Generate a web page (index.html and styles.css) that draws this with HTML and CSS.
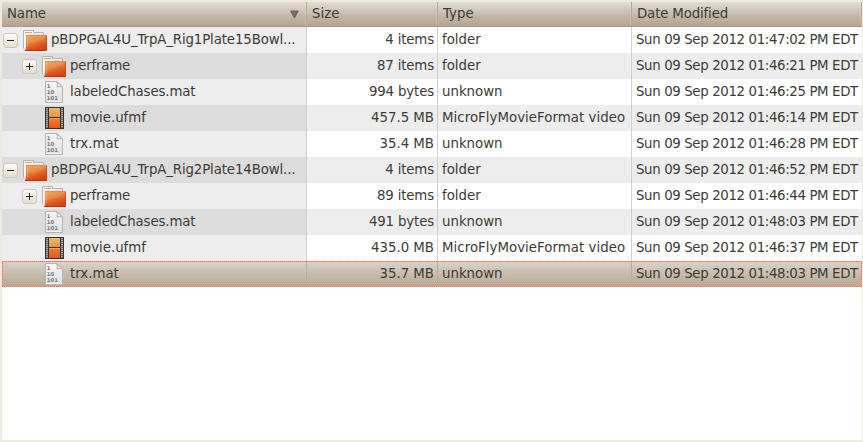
FILE: index.html
```
<!DOCTYPE html>
<html lang="en">
<head>
<meta charset="utf-8">
<title>Files</title>
<link rel="stylesheet" href="styles.css">
</head>
<body>
<svg class="defs" width="0" height="0" aria-hidden="true">
  <defs>
    <linearGradient id="g-folder" x1=".2" y1="0" x2=".65" y2="1"><stop offset="0" stop-color="#eca45c"/><stop offset=".35" stop-color="#e88842"/><stop offset=".7" stop-color="#db591f"/><stop offset="1" stop-color="#d04010"/></linearGradient>
    <linearGradient id="g-page" x1="0" y1="0" x2="0" y2="1"><stop offset="0" stop-color="#f6f6f6"/><stop offset="1" stop-color="#e0e0e0"/></linearGradient>
    <linearGradient id="g-film1" x1="0" y1="0" x2="0" y2="1"><stop offset="0" stop-color="#e8b56c"/><stop offset="1" stop-color="#e8934a"/></linearGradient>
    <linearGradient id="g-film2" x1="0" y1="0" x2="0" y2="1"><stop offset="0" stop-color="#ea8037"/><stop offset="1" stop-color="#e8551e"/></linearGradient>
  </defs>
  <symbol id="folder" viewBox="0 0 24 24">
    <path d="M.5 20.500V2.500H10.500V4.500H20.500V8" fill="#f4f4f4" stroke="#b4b4b4"/>
    <path d="M2 4.500H9" stroke="#f0a070"/>
    <path d="M11 6.500H19" stroke="#ddd"/>
    <path d="M1.500 5.500V20" stroke="#fff"/>
    <path d="M3 7H24V22Q24 23 23 23H1.500Q3 22 3 19Z" fill="url(#g-folder)"/>
    <path d="M3 7.500H24" stroke="#e38a55"/>
    <path d="M4.500 8V19" stroke="#f3b580" opacity=".6"/>
    <path d="M4 16Q15 15 23 9V8H4Z" fill="#ffd28a" opacity=".12"/>
    <path d="M2 22.500H23.500" stroke="#c62d12"/>
    <path d="M23.500 8V22" stroke="#cc3d10" opacity=".6"/>
  </symbol>
  <symbol id="page" viewBox="0 0 18 24">
    <path d="M.5 1.500H12L17.500 7V22.500H.5Z" fill="url(#g-page)" stroke="#b5b5b5"/>
    <path d="M1.500 21.500H16.500" stroke="#fff" opacity=".7"/>
    <path d="M11.500 1.500Q13 4 12 7Q15 6 17.500 7Z" fill="#fff" stroke="#b0b0b0"/>
    <g class="bits"><text x="1.800" y="8">1</text><text x="1.800" y="14">10</text><text x="1.800" y="20">101</text></g>
  </symbol>
  <symbol id="film" viewBox="0 0 19 22">
    <path d="M0 0H19V22H0Z" fill="#333"/>
    <path d="M4 1H15V10H4Z" fill="url(#g-film1)"/>
    <path d="M4 11H15V21H4Z" fill="url(#g-film2)"/>
    <path d="M4 1.500H15M4 11.500H15" stroke="#f2be86" opacity=".6"/>
    <path d="M2 1V21M17 1V21" stroke="#a5a5a5" stroke-width="2" stroke-dasharray="1.400 .6"/>
  </symbol>
</svg>
<main class="list">
  <div class="row head">
    <div class="cell name"><span>Name</span><svg class="sort" width="9" height="9"><path d="M.8 1H8.200L4.500 8Z" fill="#777068" stroke="#665f57"/></svg></div>
    <div class="cell">Size</div><div class="cell">Type</div><div class="cell title">Date Modified</div>
  </div>
  <div class="row"><div class="cell name top"><i class="toggle minus"></i><svg class="folder"><use href="#folder"/></svg><span>pBDPGAL4U_TrpA_Rig1Plate15Bowl...</span></div><div class="cell size">4 items</div><div class="cell">folder</div><div class="cell date">Sun 09 Sep 2012 01:47:02 PM EDT</div></div>
  <div class="row"><div class="cell name sub"><i class="toggle plus"></i><svg class="folder"><use href="#folder"/></svg><span class="tight">perframe</span></div><div class="cell size">87 items</div><div class="cell">folder</div><div class="cell date">Sun 09 Sep 2012 01:46:21 PM EDT</div></div>
  <div class="row"><div class="cell name leaf"><svg class="page"><use href="#page"/></svg><span>labeledChases.mat</span></div><div class="cell size">994 bytes</div><div class="cell">unknown</div><div class="cell date">Sun 09 Sep 2012 01:46:25 PM EDT</div></div>
  <div class="row"><div class="cell name leaf"><svg class="film"><use href="#film"/></svg><span class="normal">movie.ufmf</span></div><div class="cell size mb">457.5 MB</div><div class="cell video">MicroFlyMovieFormat video</div><div class="cell date">Sun 09 Sep 2012 01:46:14 PM EDT</div></div>
  <div class="row"><div class="cell name leaf"><svg class="page"><use href="#page"/></svg><span class="normal">trx.mat</span></div><div class="cell size mb">35.4 MB</div><div class="cell">unknown</div><div class="cell date">Sun 09 Sep 2012 01:46:28 PM EDT</div></div>
  <div class="row"><div class="cell name top"><i class="toggle minus"></i><svg class="folder"><use href="#folder"/></svg><span>pBDPGAL4U_TrpA_Rig2Plate14Bowl...</span></div><div class="cell size">4 items</div><div class="cell">folder</div><div class="cell date">Sun 09 Sep 2012 01:46:52 PM EDT</div></div>
  <div class="row"><div class="cell name sub"><i class="toggle plus"></i><svg class="folder"><use href="#folder"/></svg><span class="tight">perframe</span></div><div class="cell size">89 items</div><div class="cell">folder</div><div class="cell date">Sun 09 Sep 2012 01:46:44 PM EDT</div></div>
  <div class="row"><div class="cell name leaf"><svg class="page"><use href="#page"/></svg><span>labeledChases.mat</span></div><div class="cell size">491 bytes</div><div class="cell">unknown</div><div class="cell date">Sun 09 Sep 2012 01:48:03 PM EDT</div></div>
  <div class="row"><div class="cell name leaf"><svg class="film"><use href="#film"/></svg><span class="normal">movie.ufmf</span></div><div class="cell size mb">435.0 MB</div><div class="cell video">MicroFlyMovieFormat video</div><div class="cell date">Sun 09 Sep 2012 01:46:37 PM EDT</div></div>
  <div class="row selected"><div class="cell name leaf"><svg class="page"><use href="#page"/></svg><span class="normal">trx.mat</span></div><div class="cell size mb">35.7 MB</div><div class="cell">unknown</div><div class="cell date">Sun 09 Sep 2012 01:48:03 PM EDT</div></div>
</main>
</body>
</html>
```
FILE: styles.css
```
* { box-sizing: border-box; }
body { margin: 0; background: #fff; font: 13.33px/26px "DejaVu Sans", sans-serif; color: #3c3b37; }
.defs { position: absolute; }
.list { height: 442px; border: solid #eeeae0; border-width: 2px 1px 2px 2px; overflow: hidden; }
.row { display: grid; grid-template-columns: 305px 131px 194px 230px; height: 26px; background: #fff; }
.cell { display: flex; align-items: center; padding: 0 4px; border-right: 1px solid #cfcfcf; white-space: nowrap; min-width: 0; overflow: hidden; height: 26px; line-height: 26px; }
.cell:last-child { border-right-color: transparent; }
.size { justify-content: flex-end; padding-right: 3px; letter-spacing: -.15px; }
.size.mb { letter-spacing: 0; }
.video { letter-spacing: .04px; }
.date { letter-spacing: -.36px; }
.title { letter-spacing: -.15px; }
.name { background: #ededed; letter-spacing: -.12px; }
.tight { letter-spacing: -.2px; }
.normal { letter-spacing: 0; }
.row:nth-child(odd) { background: #ededed; }
.row:nth-child(odd) .name { background: #dcdcdc; }

.row.head { height: 25px; background: linear-gradient(#e2dcd2, #cbc1b3 45%, #c3b8a9 55%, #b3a594); border-bottom: 1px solid #a4978a; }
.row.head .cell { height: 24px; padding: 0 5px; background: none; border-right-color: #b5aa9c; box-shadow: inset -1px 0 rgba(255, 255, 255, .12); }
.row.head .name { justify-content: space-between; padding-right: 7px; }
.row:nth-child(even) .name { background: #ededed; }

.row.selected { position: relative; background: linear-gradient(#dcd4c9, #c9beaf 45%, #b5a796); }
.row.selected::after {
  --dots: #ff6a48 0 1px, #e6a590 1px 2px;
  content: ""; position: absolute; inset: 0;
  background:
    repeating-linear-gradient(90deg, var(--dots)) 0 0 / 100% 1px no-repeat,
    repeating-linear-gradient(90deg, var(--dots)) 0 100% / 100% 1px no-repeat,
    repeating-linear-gradient(var(--dots)) 0 0 / 1px 100% no-repeat,
    repeating-linear-gradient(var(--dots)) 100% 0 / 1px 100% no-repeat;
}
.row.selected .cell.name { background: none; }
.row.selected .cell { border-right-color: #b5aa9c; }

.cell svg { flex: none; }
.folder { width: 24px; height: 24px; margin-right: 4px; }
.page { width: 18px; height: 24px; margin-right: 7px; }
.film { width: 19px; height: 22px; margin-right: 6px; }
.top { padding-left: 1px; }
.sub { padding-left: 20px; }
.leaf { padding-left: 43px; }
.toggle { flex: none; position: relative; top: .5px; width: 15px; height: 15px; margin-right: 5px; border: 1px solid #cfc6ba; border-radius: 3px; background: linear-gradient(#fdfcfb, #e3ded3); }
.toggle::before, .plus::after { content: ""; position: absolute; left: 3px; top: 6px; width: 7px; height: 1px; background: #262626; }
.plus::after { left: 6px; top: 3px; width: 1px; height: 7px; }
.bits { font: bold 5.3px "DejaVu Sans", sans-serif; letter-spacing: 0; fill: #777; }
```
